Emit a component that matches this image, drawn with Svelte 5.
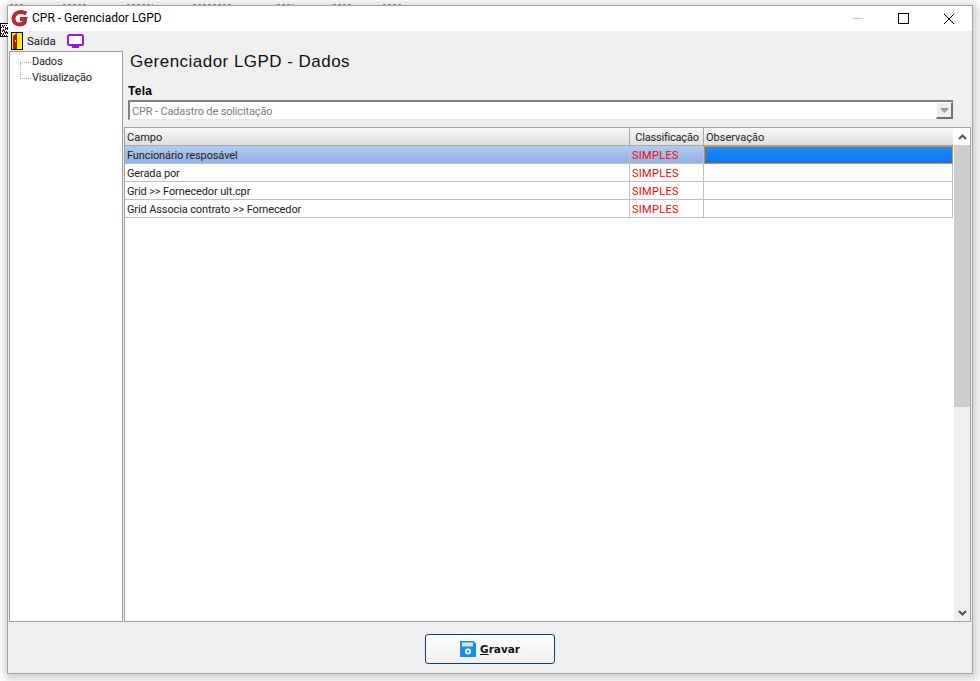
<script>
  const behindWords = [15, 24, 26, 40, 16, 20, 20];
  const rows = [
    { campo: 'Funcionário resposável', cls: 'SIMPLES', selected: true },
    { campo: 'Gerada por', cls: 'SIMPLES' },
    { campo: 'Grid >> Fornecedor ult.cpr', cls: 'SIMPLES' },
    { campo: 'Grid Associa contrato >> Fornecedor', cls: 'SIMPLES' }
  ];
</script>

<div class="desk">
  <div class="behind">
    {#each behindWords as w}<div><span class="sliver" style="width: {w}px"></span></div>{/each}
  </div>
  <svg class="deskicon" width="8" height="16" viewBox="0 0 8 16">
    <rect x="0.5" y="1.500" width="12" height="13" fill="#fff" stroke="#000"/>
    <path d="M2 3.500h6M1 5.500h7M3 7.500h5M2 9.500h6M1 11.500h7M2 13.500h6" stroke="#000" fill="none" stroke-dasharray="1 1"/>
    <path d="M2 4.500h2M5 6.500h3M2 8.500h3M4 10.500h4M2 12.500h2" stroke="#333" fill="none"/>
  </svg>
  <div class="window">
    <header class="titlebar">
      <svg class="logo" width="18" height="17" viewBox="0 0 18 17">
        <path d="M15.500 3.500C13.500 2.500 11.500 2 9.500 2 5.500 2 2.500 5 2.500 8.800c0 3.400 2.500 5.700 5.700 5.700 2.300 0 4-.7 5.300-2l.7-3.500H9" fill="none" stroke="#b22a3c" stroke-width="4"/>
      </svg>
      <span class="title">CPR - Gerenciador LGPD</span>
      <div class="controls">
        <span class="ctl min"></span>
        <span class="ctl max"></span>
        <svg class="ctl" width="12" height="12" viewBox="0 0 12 12"><path d="M1 1l10 10M11 1L1 11" stroke="#000" stroke-width="1" fill="none"/></svg>
      </div>
    </header>

    <div class="toolbar">
      <svg class="door" width="12" height="18" viewBox="0 0 12 18">
        <rect width="12" height="18" fill="#000"/>
        <rect x="1" y="1" width="10" height="16" fill="#ffee00"/>
        <path d="M2 4l4-3v16H2z" fill="#a01818"/>
        <rect x="4" y="8" width="1" height="2" fill="#ffee00"/>
      </svg>
      <span class="exit">Saída</span>
      <svg class="tv" width="17" height="14" viewBox="0 0 17 14">
        <rect x="1" y="1" width="15" height="10" rx="1.500" fill="#fff" stroke="#9a14f0" stroke-width="2"/>
        <rect x="5" y="12" width="7" height="2" fill="#9a14f0"/>
      </svg>
    </div>

    <div class="main">
      <aside class="tree">
        <div class="node"><span class="dots"></span>Dados</div>
        <div class="node"><span class="dots"></span>Visualização</div>
      </aside>

      <section class="content">
        <h1>Gerenciador LGPD - Dados</h1>
        <label class="lbl" for="tela">Tela</label>
        <div class="combo" id="tela">
          <span class="combotext">CPR - Cadastro de solicitação</span>
          <span class="combobtn"><svg width="9" height="5" viewBox="0 0 9 5"><path d="M0 0h9L4.500 5z" fill="#9a9a9a"/></svg></span>
        </div>

        <div class="gridwrap">
          <div class="grid">
            <div class="head">
              <div class="hc">Campo</div>
              <div class="hc center">Classificação</div>
              <div class="hc">Observação</div>
            </div>
            {#each rows as r}
              <div class="row" class:selected={r.selected}>
                <div class="c">{r.campo}</div>
                <div class="c red">{r.cls}</div>
                <div class="c obs"></div>
              </div>
            {/each}
          </div>
          <div class="scroll">
            <span class="arrow">
              <svg width="9" height="6" viewBox="0 0 9 6"><path d="M1 5l3.500-3.500L8 5" stroke="#555" stroke-width="2" fill="none"/></svg>
            </span>
            <div class="thumb"></div>
            <div class="track"></div>
            <span class="arrow">
              <svg width="9" height="6" viewBox="0 0 9 6"><path d="M1 1l3.500 3.500L8 1" stroke="#555" stroke-width="2" fill="none"/></svg>
            </span>
          </div>
        </div>
      </section>
    </div>

    <footer class="footer">
      <button class="save">
        <svg width="16" height="16" viewBox="0 0 16 16">
          <path d="M0 0h13.500L16 2.500V16H0z" fill="#1a8fe8"/>
          <rect x="2" y="1.500" width="11" height="4" fill="#cfe6f8"/>
          <circle cx="8" cy="10.500" r="3" fill="#fff"/>
          <circle cx="8" cy="10.500" r="1.200" fill="#1a8fe8"/>
        </svg>
        <span><u>G</u>ravar</span>
      </button>
    </footer>
  </div>
</div>

<style>
  :global(body) {
    margin: 0;
    background: #fff;
  }
  .desk {
    position: relative;
    width: 980px;
    height: 681px;
    overflow: hidden;
    padding: 5px 7px 7px 7px;
    box-sizing: border-box;
    font-family: Roboto, "Liberation Sans", Arial, sans-serif;
    font-size: 11px;
    color: #000;
  }
  .behind {
    position: absolute;
    top: 4px;
    left: 10px;
    display: grid;
    grid-template-columns: 53px 64px 66px 84px 56px 50px auto;
    z-index: 1;
  }
  .sliver {
    display: block;
    height: 1px;
    background: repeating-linear-gradient(90deg, #888 0 3px, transparent 3px 5px);
  }
  .deskicon {
    position: absolute;
    left: 0;
    top: 22px;
    z-index: 1;
  }
  .window {
    position: relative;
    height: 669px;
    display: flex;
    flex-direction: column;
    box-sizing: border-box;
    background: #efefef;
    border: 1px solid #a3a3a3;
    box-shadow: 1px 2px 9px 3px rgba(0, 0, 0, 0.2);
  }
  .titlebar {
    height: 25px;
    flex: none;
    background: #fff;
    display: flex;
    align-items: center;
    padding-left: 3px;
  }
  .logo {
    margin-right: 3px;
  }
  .title {
    font-size: 12px;
    line-height: 14px;
    padding-bottom: 2px;
  }
  .controls {
    margin-left: auto;
    display: flex;
    align-items: center;
  }
  .ctl {
    display: block;
  }
  .min {
    width: 10px;
    height: 1px;
    background: #c4c4c4;
    margin-right: 35px;
  }
  .max {
    width: 9px;
    height: 9px;
    border: 1px solid #000;
    margin-right: 34px;
  }
  .controls svg {
    margin-right: 17px;
  }
  .toolbar {
    height: 20px;
    flex: none;
    display: flex;
    align-items: center;
    padding-left: 3px;
  }
  .exit {
    font-size: 11.500px;
    margin-left: 4px;
    color: #111;
  }
  .tv {
    margin-left: 11px;
  }
  .main {
    flex: 1;
    min-height: 0;
    display: flex;
    padding-left: 1px;
  }
  .tree {
    width: 114px;
    margin-right: 1px;
    background: #fff;
    border: 1px solid #9c9c9c;
    box-sizing: border-box;
    flex: none;
    padding-top: 2px;
  }
  .node {
    position: relative;
    height: 16px;
    line-height: 16px;
    display: flex;
    align-items: center;
    font-size: 11px;
    letter-spacing: -0.2px;
    padding-left: 10px;
    color: #222;
  }
  .dots {
    position: relative;
    width: 11px;
    border-top: 1px dotted #aaa;
    margin-right: 1px;
  }
  .node + .node .dots::before {
    content: '';
    position: absolute;
    left: 0;
    top: -16px;
    height: 16px;
    border-left: 1px dotted #aaa;
  }
  .content {
    flex: 1;
    min-width: 0;
    display: flex;
    flex-direction: column;
  }
  h1 {
    margin: 0;
    font-family: "Liberation Sans", Arial, sans-serif;
    font-size: 17px;
    font-weight: 400;
    height: 31px;
    line-height: 22px;
    padding: 0 0 0 6px;
    box-sizing: border-box;
    letter-spacing: 0.47px;
    color: #111;
  }
  .lbl {
    font-family: "Liberation Sans", Arial, sans-serif;
    font-size: 12px;
    font-weight: 700;
    padding-left: 4px;
    height: 16px;
    line-height: 18px;
    letter-spacing: 0.3px;
  }
  .combo {
    margin: 2px 19px 0 4px;
    height: 20px;
    box-sizing: border-box;
    background: #fff;
    border: 2px solid #808080;
    border-right: 0;
    border-bottom: 1px solid #e8e8e8;
    display: flex;
    align-items: center;
    justify-content: space-between;
    flex: none;
  }
  .combotext {
    color: #7d7d7d;
    padding-left: 2px;
    padding-top: 1px;
    letter-spacing: -0.15px;
  }
  .combobtn {
    width: 17px;
    height: 17px;
    box-sizing: border-box;
    background: #eee;
    border: 1px solid #fff;
    border-right: 2px solid #707070;
    border-bottom: 2px solid #707070;
    display: flex;
    align-items: center;
    justify-content: center;
  }
  .gridwrap {
    flex: 1;
    min-height: 0;
    margin-top: 7px;
    margin-right: 1px;
    display: flex;
    background: #fff;
    border: 1px solid #a0a0a0;
  }
  .grid {
    flex: 1;
    min-width: 0;
    display: flex;
    flex-direction: column;
  }
  .head,
  .row {
    display: grid;
    grid-template-columns: 505px 74px 1fr;
    grid-template-rows: 18px;
    height: 18px;
    box-sizing: border-box;
  }
  .hc {
    height: 18px;
    line-height: 17px;
    padding: 1px 0 0 2px;
    box-sizing: border-box;
    background: linear-gradient(#f8f8f8, #dfdfdf);
    border-right: 1px solid #a8a8a8;
    border-bottom: 1px solid #a8a8a8;
    color: #222;
  }
  .hc.center {
    text-align: center;
    padding-left: 1px;
    letter-spacing: -0.2px;
  }
  .hc:last-child {
    border-right: 0;
  }
  .c {
    height: 18px;
    line-height: 17px;
    padding: 1px 0 0 2px;
    box-sizing: border-box;
    border-right: 1px solid #c0c0c0;
    border-bottom: 1px solid #c0c0c0;
    color: #222;
    white-space: nowrap;
    letter-spacing: -0.12px;
  }
  .c.red {
    color: #ff0000;
    letter-spacing: 0.3px;
  }
  .row.selected {
    background: linear-gradient(#b0caf0, #8fb0e6);
  }
  .row.selected .obs {
    background: linear-gradient(#1b8cff, #0f76f5);
    border: 1px dotted #e88a10;
    outline: 1px solid #e88a10;
    outline-offset: -1px;
  }
  .scroll {
    width: 17px;
    flex: none;
    display: flex;
    flex-direction: column;
    background: #efefef;
    border-left: 1px solid #fff;
    box-sizing: border-box;
  }
  .arrow {
    height: 17px;
    flex: none;
    display: flex;
    align-items: center;
    justify-content: center;
    background: #fff;
  }
  .arrow:last-child {
    background: #efefef;
  }
  .thumb {
    height: 262px;
    flex: none;
    background: #cdcdcd;
  }
  .track {
    flex: 1;
  }
  .footer {
    height: 51px;
    flex: none;
    display: flex;
    justify-content: center;
    align-items: flex-start;
    padding-top: 12px;
    box-sizing: border-box;
  }
  .save {
    width: 130px;
    height: 30px;
    padding: 0;
    display: flex;
    align-items: center;
    justify-content: center;
    gap: 4px;
    background: linear-gradient(#fff, #f1eeec);
    border: 1px solid #0b3f7e;
    border-radius: 3px;
    font-family: "DejaVu Sans", sans-serif;
    font-size: 10.500px;
    font-weight: 700;
    color: #111;
  }
</style>
